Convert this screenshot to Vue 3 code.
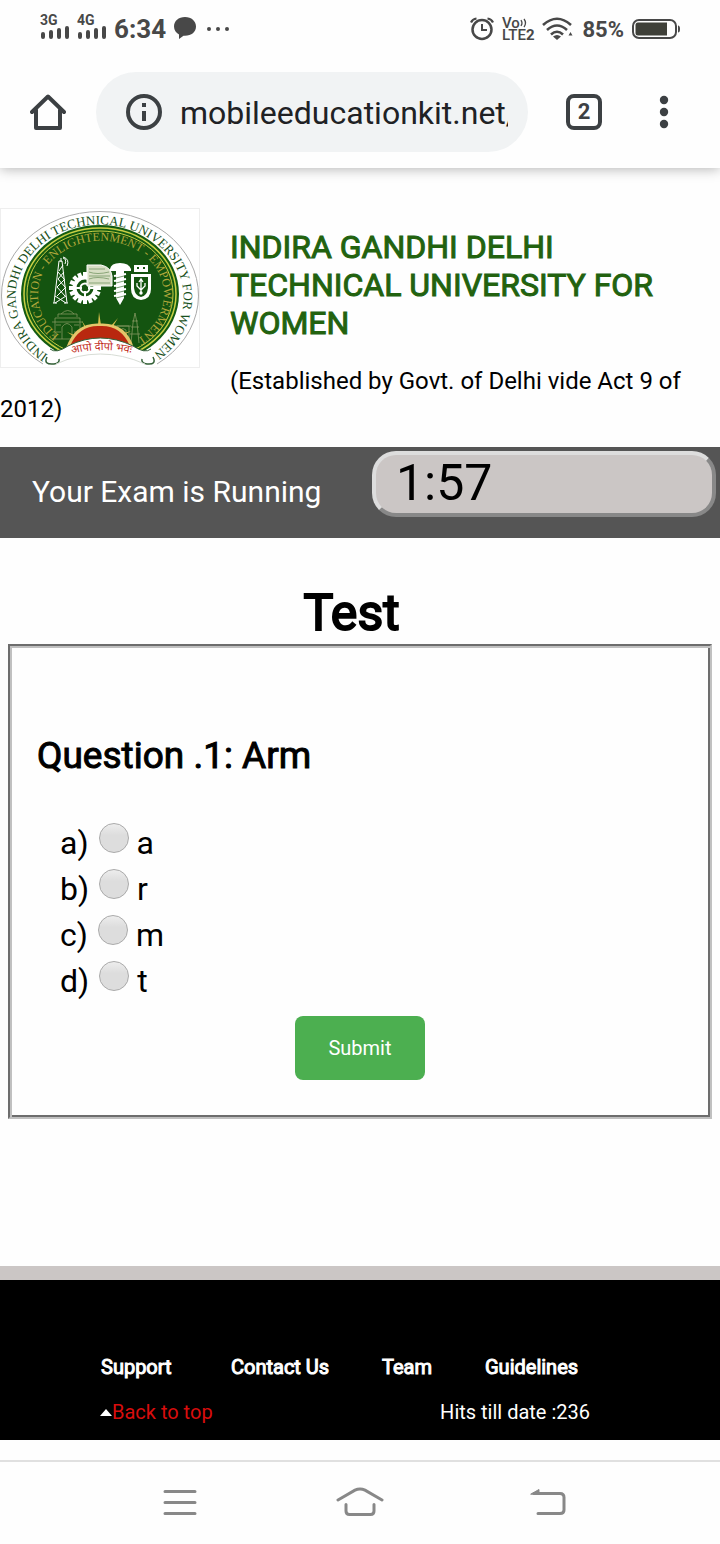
<script setup>
import { ref } from 'vue'

const answer = ref('')
const options = [
  { key: 'a', text: 'a' },
  { key: 'b', text: 'r' },
  { key: 'c', text: 'm' },
  { key: 'd', text: 't' }
]
const links = ['Support', 'Contact Us', 'Team', 'Guidelines']
const networks = ['3G', '4G']
const teeth = Array.from({ length: 16 }, (_, i) => i * 22.5)
</script>

<template>
  <div class="phone">
    <div class="status">
      <div class="status-group">
        <div v-for="n in networks" :key="n" class="signal">
          <span>{{ n }}</span>
          <svg width="30" height="14" viewBox="0 0 30 14" fill="none" stroke="#484848" stroke-width="4" stroke-linecap="round">
            <path d="M3 9v3M11 7v5M19 5v7M27 3v9" />
          </svg>
        </div>
        <span class="clock">6:34</span>
        <svg class="bubble" width="24" height="24" viewBox="0 0 24 24" fill="#484848">
          <path d="M12 1C5.500 1 1 5 1 10.500c0 3.500 2 6.500 5 8V23l4.500-3.200H12c6.500 0 11-4 11-9.300S18.500 1 12 1z" />
        </svg>
        <svg width="28" height="6" viewBox="0 0 28 6" fill="#484848">
          <circle cx="5" cy="3" r="2" /><circle cx="14" cy="3" r="2" /><circle cx="23" cy="3" r="2" />
        </svg>
      </div>
      <div class="status-group right">
        <svg width="24" height="24" viewBox="0 0 24 24" fill="none" stroke="#484848">
          <circle cx="12" cy="12.500" r="9.500" stroke-width="2.500" />
          <path d="M12 7v6h5" stroke-width="2" />
          <path d="M1 5.500Q2.500 2 6.500 1.500M17.500 1.500Q21.500 2 23 5.500" stroke-width="2.200" />
        </svg>
        <div class="volte">
          <span class="vo">Vo<svg width="8" height="10" viewBox="0 0 8 10" fill="none" stroke="#484848" stroke-width="1.300"><path d="M1 2q2 3 0 6M4 1q3 4 0 8" /></svg></span>
          <span class="lte">LTE<b>2</b></span>
        </div>
        <svg width="32" height="24" viewBox="0 0 32 24" fill="none" stroke="#484848" stroke-width="2.600">
          <path d="M1 8Q15 -4.500 29 8M5 13Q15 4 25 13M9 17.500Q15 12 21 17.500" />
          <path d="M11 19.500q4-3 8 0L15 23z" fill="#484848" stroke="none" />
          <path d="M26.500 18.500l2-3.500 2 3.500z" fill="#484848" stroke="none" />
        </svg>
        <span class="percent">85%</span>
        <svg width="48" height="20" viewBox="0 0 48 20" fill="none" stroke="#484848">
          <rect x="1" y="1" width="43" height="18" rx="6" stroke-width="2" />
          <path d="M6 3.500h29v13H6q-2.500 0-2.500-2.500V6q0-2.500 2.500-2.500z" fill="#3f4039" stroke="none" />
          <path d="M46 6.500q2 0 2 3.500t-2 3.500z" fill="#484848" stroke="none" />
        </svg>
      </div>
    </div>

    <div class="toolbar">
      <button type="button" class="icon-button" aria-label="Home">
        <svg width="36" height="36" viewBox="0 0 36 36" fill="none" stroke="#3c4043" stroke-width="4" stroke-linejoin="round" stroke-linecap="round">
          <path d="M2 18L18 2.500 34 18" /><path d="M6 16v18h24V16" />
        </svg>
      </button>
      <div class="address">
        <svg width="36" height="36" viewBox="0 0 36 36" fill="none" stroke="#3c4043" stroke-width="4">
          <circle cx="18" cy="18" r="16" /><path d="M18 9v4M18 17v10" />
        </svg>
        <input type="text" value="mobileeducationkit.net/" aria-label="Address" />
      </div>
      <button type="button" class="tabs" aria-label="Open tabs">2</button>
      <button type="button" class="icon-button" aria-label="Menu">
        <svg width="10" height="34" viewBox="0 0 10 34" fill="#3c4043">
          <circle cx="5" cy="5" r="4.200" /><circle cx="5" cy="17" r="4.200" /><circle cx="5" cy="29" r="4.200" />
        </svg>
      </button>
    </div>

    <main class="page">
      <header class="masthead">
        <svg class="crest" width="200" height="160" viewBox="0 0 200 160" role="img" aria-label="University crest">
          <defs>
            <path id="outer-arc" d="M48 147A84 73 0 1 1 154 145" />
            <path id="inner-arc" d="M59 127A63 54 0 1 1 137 131" />
            <path id="banner-arc" d="M72 146Q100 138 134 146" />
          </defs>
          <rect x="0.500" y="0.500" width="199" height="159" fill="#fff" stroke="#eee" />
          <path d="M43 156A98.500 84 0 1 1 157 156" fill="none" stroke="#aaa" />
          <ellipse cx="100" cy="86" rx="79" ry="69" fill="#145c12" />
          <ellipse cx="100" cy="86" rx="76" ry="66" fill="#145c12" stroke="#c9cf45" stroke-width="1.500" />
          <ellipse cx="100" cy="86" rx="73" ry="63" fill="#145410" stroke="#c9cf45" />
          <text font-size="13" fill="#174f20" class="serif"><textPath href="#outer-arc">INDIRA GANDHI DELHI TECHNICAL UNIVERSITY FOR WOMEN</textPath></text>

          <g fill="none" stroke="#fff">
            <path d="M54 95L59 53h3l5 42M57 88l9-9M65 88l-8-9M57 79l8-8M65 79l-7-8M58 71l6-7M64 71l-6-7M59 63l4-6M55 95l11-7M66 95l-11-7M53 95h4M64 95h4" />
            <path d="M61 54v-4M63 50q4 1 2 6M63 49q7 2 4 9" />
          </g>
          <g fill="#fff">
            <rect v-for="t in teeth" :key="t" x="83" y="64" width="4" height="6" :transform="`rotate(${t} 85 80)`" />
          </g>
          <circle cx="85" cy="80" r="10.500" fill="none" stroke="#fff" stroke-width="4" />
          <circle cx="85" cy="80" r="4.500" fill="none" stroke="#fff" stroke-width="2" />
          <path d="M76 80h6M88 80h9M85 83v8" stroke="#fff" stroke-width="2" />
          <path d="M87 57h14q10 2 11 11v10H87z" fill="#d8dfc5" stroke="#fff" />
          <path d="M89 61h16M89 64q8 3 20 0M89 68h21M89 71q8-3 20 0M89 75h21" fill="none" stroke="#698c58" stroke-width="0.700" />
          <path d="M110 61q1-6 10-6t11 6v2h-21zM116 63h8v27l-4 7-4-7z" fill="#fff" />
          <path d="M114 68l12-2M114 73l12-2M114 78l12-2M114 83l12-2M114 88l12-2" stroke="#fff" stroke-width="2" />
          <path d="M116 70l8-2M116 75l8-2M116 80l8-2M116 85l8-2M116 90l8-2" stroke="#5a8650" stroke-width="0.800" />
          <path d="M134 64v-7h14v7zM131 66h20v15q0 10-10 11-10-1-10-11z" fill="#fff" />
          <path d="M134 69h14v11q-1 8-7 9-6-1-7-9z" fill="#145410" />
          <path d="M137 59h2v2h-2zM143 59h2v2h-2z" fill="#145410" />
          <path d="M141 85V72M139 74l2-3 2 3M137 75v3l4 4 4-4v-3" fill="none" stroke="#fff" stroke-width="1.300" />
          <circle cx="141" cy="85" r="1.700" fill="#fff" />

          <g fill="none" stroke="#83975f" stroke-width="0.800">
            <path d="M55 131v-21h25v21M58 109v-3h19v3M61 106q7-7 13 0M62 131v-12q5-7 10 0v12M52 114h31M52 131h31M56 117h5M74 117h5M56 124h5M74 124h5" />
            <path d="M131 135l2-20 2-10 2 10 2 20M132 113h6M131 119h8M130 126h10M117 130v-12h12v13M120 130v-8q3-3 6 0v8M115 118h16" />
          </g>
          <path d="M82 113l6 9-2 1zM99 104l2 13h-3zM118 110l-6 10-2-1zM67 124l10 4-1 2zM131 123l-9 5-1-2z" fill="#d6bd4b" />
          <path d="M66 140Q75 114 100 115.500 126 114 134 140z" fill="#e5c66a" />
          <path d="M70 138Q79 117 100 118 121 117 130 138z" fill="#b9280f" />
          <text font-size="12" fill="#b2a83c" class="serif"><textPath href="#inner-arc">EDUCATION - ENLIGHTENMENT - EMPOWERMENT</textPath></text>
          <path d="M50 141Q56 146 68 138 100 122 133 138 145 146 151 141L153 159H47z" fill="#fff" />
          <path d="M50 141Q56 146 68 138 100 122 133 138 145 146 151 141" fill="none" stroke="#315f35" />
          <path d="M47 149Q43 157 54 156 60 155 59 151M153 149Q157 157 147 156 141 155 142 151" fill="none" stroke="#315f35" stroke-width="1.500" />
          <path d="M56 156Q100 136 145 156" fill="none" stroke="#d8ddd6" />
          <text font-size="11" fill="#c22c1b" class="deva"><textPath href="#banner-arc">आपो दीपो भवः</textPath></text>
        </svg>
        <h1>INDIRA GANDHI DELHI TECHNICAL UNIVERSITY FOR WOMEN</h1>
        <p>(Established by Govt. of Delhi vide Act 9 of 2012)</p>
      </header>

      <div class="exam-bar">
        <span>Your Exam is Running</span>
        <div class="timer" role="timer">1:57</div>
      </div>

      <h2 class="title">Test</h2>
      <form class="quiz" @submit.prevent>
        <h3 id="question">Question .1: Arm</h3>
        <div class="options" role="radiogroup" aria-labelledby="question">
          <label v-for="o in options" :key="o.key">
            <span>{{ o.key }})</span>
            <input v-model="answer" type="radio" name="answer" :value="o.key" />
            <span>{{ o.text }}</span>
          </label>
        </div>
        <button type="submit" class="submit">Submit</button>
      </form>
    </main>

    <footer class="footer">
      <nav class="footer-links">
        <a v-for="l in links" :key="l" href="#">{{ l }}</a>
      </nav>
      <div class="footer-row">
        <a href="#" class="top-link">
          <svg width="12" height="7" viewBox="0 0 12 7" fill="#fff"><path d="M0 7L6 0l6 7z" /></svg>Back to top
        </a>
        <span>Hits till date :236</span>
      </div>
    </footer>

    <nav class="system-nav">
      <button type="button" aria-label="Recent apps">
        <svg width="48" height="32" viewBox="0 0 48 32"><path d="M9 5.500h30M9 16.500h30M9 27.500h30" /></svg>
      </button>
      <button type="button" aria-label="Home screen">
        <svg width="48" height="32" viewBox="0 0 48 32"><path d="M2 14L19 4.200q5-2.400 10 0L46 14M10 18.500V25q0 3.500 3.500 3.500h21q3.500 0 3.500-3.500v-6.500" /></svg>
      </button>
      <button type="button" aria-label="Back">
        <svg width="48" height="32" viewBox="0 0 48 32"><path d="M8 7.500h26q4 0 4 4V24q0 3.500-4 3.500H12" /><path d="M5 8l8-4.500V8z" class="tip" /></svg>
      </button>
    </nav>
  </div>
</template>

<style>
body {
  background: #fefefe;
}
</style>

<style scoped>
.phone {
  font-family: Roboto, "Liberation Sans", sans-serif;
  color: #000;
  display: flex;
  flex-direction: column;
  min-height: 100vh;
}
.phone svg {
  display: block;
  flex: none;
}
button {
  font-family: inherit;
  border: 0;
  background: none;
  padding: 0;
}
.status {
  box-sizing: border-box;
  height: 56px;
  padding: 2px 40px 0;
  display: flex;
  align-items: center;
  justify-content: space-between;
  color: #484848;
}
.status-group {
  display: flex;
  align-items: center;
  gap: 7px;
}
.status-group.right {
  gap: 8px;
}
.signal {
  display: flex;
  flex-direction: column;
  font-size: 14px;
  font-weight: 700;
  line-height: 10px;
  padding-bottom: 4px;
}
.clock {
  font-size: 26px;
  font-weight: 700;
}
.bubble {
  margin-bottom: 2px;
}
.volte {
  display: flex;
  flex-direction: column;
  font-size: 15px;
  font-weight: 500;
  line-height: 12px;
}
.vo {
  display: flex;
  align-items: center;
}
.percent {
  font-size: 22px;
  font-weight: 700;
}
.toolbar {
  height: 112px;
  padding: 0 51px 0 30px;
  display: flex;
  align-items: center;
  box-shadow: 0 1px 12px rgba(0, 0, 0, 0.3);
  clip-path: inset(0 0 -16px 0);
}
.address {
  flex: 1;
  min-width: 0;
  height: 80px;
  box-sizing: border-box;
  border-radius: 40px;
  background: #f1f3f4;
  margin: 0 38px 0 30px;
  padding: 2px 20px 0 30px;
  display: flex;
  align-items: center;
  gap: 18px;
}
.address svg {
  margin-bottom: 2px;
}
.address input {
  flex: 1;
  min-width: 0;
  border: 0;
  padding: 0;
  background: none;
  font-family: inherit;
  font-size: 32px;
  color: #202124;
}
.tabs {
  width: 36px;
  height: 36px;
  border: 4px solid #3c4043;
  border-radius: 8px;
  color: #3c4043;
  font-size: 22px;
  font-weight: 700;
  line-height: 28px;
  margin-right: 57px;
}
.masthead {
  padding-top: 40px;
  height: 239px;
}
.crest {
  float: left;
  margin-right: 30px;
}
.serif {
  font-family: "Liberation Serif", serif;
}
.deva {
  font-family: "Noto Sans", sans-serif;
}
h1,
h2,
h3,
p {
  margin: 0;
  font-weight: 400;
}
h1 {
  padding-top: 20px;
  font-size: 32px;
  line-height: 38px;
  color: #22620f;
  -webkit-text-stroke: 1px #22620f;
}
.masthead p {
  margin-top: 25px;
  font-size: 24px;
  line-height: 28px;
}
.exam-bar {
  box-sizing: border-box;
  height: 91px;
  background: #555;
  color: #fff;
  padding: 4px 4px 21px 32px;
  display: flex;
  justify-content: space-between;
  font-size: 30px;
  line-height: 82px;
}
.timer {
  box-sizing: border-box;
  flex: none;
  width: 344px;
  height: 66px;
  border: 4px solid;
  border-color: #ddd #888 #888 #ddd;
  border-radius: 24px;
  background: #cbc6c5;
  color: #000;
  padding-left: 20px;
  font-size: 50px;
  line-height: 56px;
}
.title {
  margin-top: 45px;
  padding-right: 17px;
  text-align: center;
  font-size: 50px;
  line-height: 60px;
  -webkit-text-stroke: 2px #000;
}
.quiz {
  margin: 1px 8px 0;
  border: 2px solid;
  border-color: #6d6d6d #c0c0c0 #c0c0c0 #6d6d6d;
  box-shadow: inset 2px 2px #c0c0c0, inset -2px -2px #6d6d6d;
  padding: 88px 27px 37px;
}
.quiz h3 {
  font-size: 37px;
  line-height: 44px;
  -webkit-text-stroke: 1px #000;
}
.options {
  margin-top: 42px;
  padding-left: 23px;
  font-size: 32px;
  line-height: 46px;
}
.options label {
  display: flex;
  width: max-content;
}
.options input {
  appearance: none;
  width: 30px;
  height: 30px;
  box-sizing: border-box;
  border: 1px solid #aaa;
  border-radius: 50%;
  margin: 3px 8px 0 10px;
  background: linear-gradient(#ededed, #ddd 40%, #ddd);
}
.options input:checked {
  background: radial-gradient(circle, #444 30%, #ddd 35%);
}
.submit {
  display: block;
  margin: 12px auto 0;
  width: 130px;
  height: 64px;
  border-radius: 8px;
  background: #4caf50;
  color: #fff;
  font-size: 20px;
}
.footer {
  margin-top: 147px;
  border-top: 14px solid #cbc6c5;
  background: #000;
  color: #fff;
  padding: 71px 100px 12px;
  font-size: 20px;
  line-height: 32px;
}
.footer a {
  color: #fff;
  text-decoration: none;
}
.footer-links {
  display: grid;
  grid-template-columns: 130px 151px 103px auto;
  padding-left: 1px;
  -webkit-text-stroke: 1px #fff;
}
.footer-row {
  margin-top: 13px;
  padding-right: 30px;
  display: flex;
  justify-content: space-between;
}
.footer .top-link {
  display: flex;
  align-items: center;
  color: #d80d0d;
}
.system-nav {
  margin-top: 20px;
  border-top: 2px solid #e0e0e0;
  flex: 1;
  display: flex;
  justify-content: space-between;
  align-items: center;
  padding: 0 146px 2px 156px;
}
.system-nav button:nth-child(2) {
  margin-right: 10px;
}
.system-nav path {
  fill: none;
  stroke: #888;
  stroke-width: 3;
  stroke-linecap: round;
}
.system-nav .tip {
  fill: #888;
  stroke-width: 1;
}
</style>
